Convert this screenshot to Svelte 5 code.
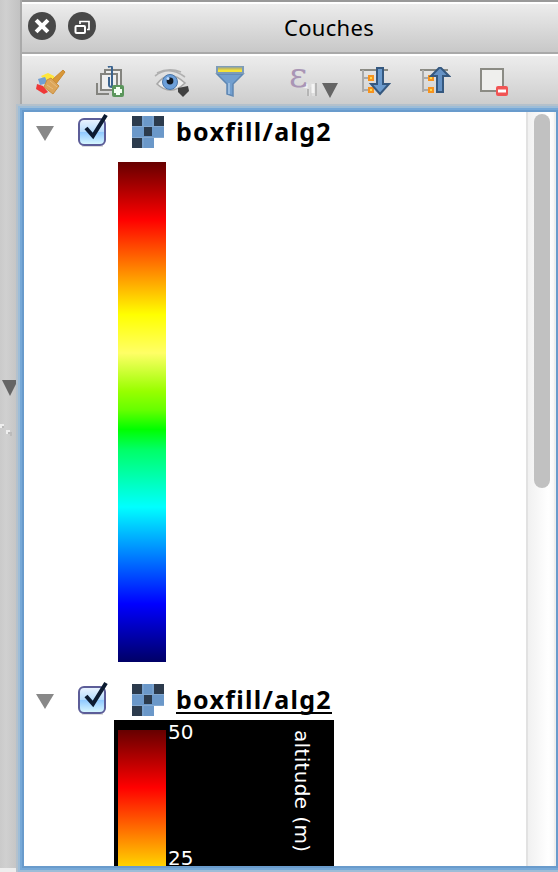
<script>
  const layers = [
    { name: 'boxfill/alg2', active: false },
    { name: 'boxfill/alg2', active: true }
  ];
</script>

{#snippet treeMark(down)}
  <svg class="icon sort" width="32" height="32" viewBox="0 0 32 32">
    <path d="M1 3H29" stroke="#8b8b84" stroke-width="2" />
    <path d="M4 3V25M4 11H10M4 23H10" stroke="#aaa" stroke-width="2" fill="none" />
    <path d="M10 9h4v4h-4zM10 21h4v4h-4z" fill="#ffd84a" stroke="#f7931e" stroke-width="2" />
    {#if down}
      <path d="M18 1h6v16h6l-9 10-9-10h6z" fill="#6b9bce" stroke="#35587f" stroke-width="2" />
    {:else}
      <path d="M18 25h6V9h6L21 0 12 9h6z" fill="#6592c5" stroke="#35587f" stroke-width="2" />
    {/if}
  </svg>
{/snippet}

<div class="window">
  <aside class="splitter">
    <svg width="20" height="60" viewBox="0 0 20 60">
      <path d="M2 0H18L10 16Z" fill="#656565" />
      <path d="M0 44h4v4h-4zM6 50h4v4h-4z" fill="#eee" />
      <path d="M2 46h2v2h-2zM8 52h4v4h-2v-2h-2z" fill="#bbb" />
    </svg>
  </aside>
  <section class="panel">
    <header class="titlebar">
      <svg class="buttons" width="70" height="30" viewBox="0 0 70 30">
        <circle cx="15" cy="15" r="14" fill="#484848" />
        <path d="M10.500 10.500L19.500 19.500M19.500 10.500L10.500 19.500" stroke="#fff" stroke-width="4" stroke-linecap="square" />
        <circle cx="55" cy="15" r="14" fill="#484848" />
        <path d="M53 13V10.500H62V18.500H60" fill="none" stroke="#fff" stroke-width="1.700" />
        <rect x="48.500" y="15" width="9.500" height="7" rx="1" fill="#484848" stroke="#fff" stroke-width="2" />
      </svg>
      <h1>Couches</h1>
    </header>

    <div class="toolbar">
      <svg class="icon style" width="34" height="32" viewBox="0 0 34 32">
        <path d="M6 9l7-3 6 3 1 5-9 1z" fill="#ffe63b" />
        <path d="M3 12l7-2 3 6-8 2z" fill="#719fd3" />
        <path d="M2 17l6 2 5 6-4 2-8-5z" fill="#ef3838" />
        <path d="M17 13L28 3l2 2-9 12z" fill="#d89738" stroke="#c98931" />
        <path d="M12 13l4-2 8 8-6 8-9-7z" fill="#dca55a" stroke="#c98f40" />
        <path d="M12 18l6 4M15 14l7 6" stroke="#e8bd7c" />
      </svg>
      <svg class="icon group" width="32" height="34" viewBox="0 0 32 34">
        <path d="M2 17V28H14" fill="none" stroke="#84847f" stroke-width="2" />
        <rect x="10" y="4" width="16" height="19" fill="#eee" stroke="#84847f" stroke-width="2" />
        <rect x="6" y="8" width="16" height="16" fill="#efefef" stroke="#84847f" stroke-width="2" />
        <path d="M14 11V19q0 2 3 2V2q0-3-4-1M17 2V21" fill="none" stroke="#3c648f" stroke-width="2" />
        <rect x="17" y="19" width="12" height="12" rx="2" fill="#5b965c" />
        <path d="M23 21v8M19 25h8" stroke="#f4fff4" stroke-width="4" />
      </svg>
      <svg class="icon eye" width="38" height="34" viewBox="0 0 38 34">
        <path d="M1 9Q15-2 31 10M3 6Q15 0 27 5" fill="none" stroke="#b0b0b0" stroke-width="1.600" />
        <path d="M3 17Q15 1 31 16Q17 30 3 17Z" fill="#eee" stroke="#a8a8a8" stroke-width="1.600" />
        <circle cx="16" cy="15" r="7.500" fill="#6c9fd9" stroke="#4b76a8" />
        <circle cx="16" cy="14" r="3.400" fill="#121a24" />
        <circle cx="14" cy="11.500" r="1.500" fill="#bddcff" />
        <path d="M24 21L29 20l5-1 1 5-6 6-5-5z" fill="#414141" />
      </svg>
      <svg class="icon funnel" width="30" height="34" viewBox="0 0 30 34">
        <path d="M2 8L12 18V28l6 2V18L28 8Z" fill="#729fcf" stroke="#5f87b3" stroke-width="1.500" />
        <path d="M14 17V28" stroke="#9bbde0" stroke-width="2" />
        <rect x="2" y="1" width="26" height="6" fill="#f6e437" stroke="#7d9cb8" stroke-width="2" />
        <path d="M3 2.500H27" stroke="#c2bb62" stroke-width="2" />
      </svg>
      <div class="expression">
        <span>ε</span>
        <svg width="50" height="34" viewBox="0 0 50 34">
          <path d="M14 17q7-3 14 0v10l-2 3h-3v-9h-2v9h-3l-1-7-3-1z" fill="#dedede" />
          <path d="M17 18v4M24 18v9" stroke="#f4f4f4" stroke-width="3" />
          <path d="M27 17v13M19 23v7" stroke="#b5b5b5" stroke-width="2" />
          <path d="M33 17H49L41 32Z" fill="#656565" />
        </svg>
      </div>
      {@render treeMark(true)}
      {@render treeMark(false)}
      <svg class="icon remove" width="32" height="34" viewBox="0 0 32 34">
        <rect x="2" y="2" width="22" height="22" fill="#efefed" stroke="#8b8b84" stroke-width="2" />
        <rect x="17" y="19" width="12" height="10" rx="2" fill="#f15454" />
        <path d="M19 24h8" stroke="#fff" stroke-width="3" />
      </svg>
    </div>

    <main class="view">
      <div class="tree">
        {#each layers as layer}
          <div class="layer">
            <div class="row">
              <svg width="150" height="40" viewBox="0 0 150 40">
                <defs>
                  <linearGradient id="check" x2="0" y2="1">
                    <stop stop-color="#edf5ff" /><stop offset=".48" stop-color="#b6dcfc" />
                    <stop offset=".52" stop-color="#91caff" /><stop offset="1" stop-color="#dcfaff" />
                  </linearGradient>
                </defs>
                <path d="M12 14H30L21 29Z" fill="#888" />
                <path d="M58 34H79" stroke="#ddd" stroke-width="2" />
                <rect x="55" y="7" width="26" height="26" rx="5" fill="url(#check)" stroke="#5c5d98" stroke-width="2" />
                <path d="M62 16L69 24L82 3" fill="none" stroke="#0c1b31" stroke-width="4" />
                <path d="M108 4h32v22h-10v10h-22z" fill="#6b98c9" />
                <path d="M108 4h10v10h-10zM130 4h10v10h-10zM120 15h8v9h-8zM108 26h10v10h-10z" fill="#2c3b4d" />
                <path d="M119 4V14M129 4V14M119 26V36M108 14.500h32M108 25.500h32" stroke="#84a9d1" />
              </svg>
              <span class="name" class:active={layer.active}>{layer.name}</span>
            </div>
            {#if layer.active}
              <div class="legend">
                <div class="ramp"></div>
                <div class="ticks"><span>50</span><span>25</span></div>
                <div class="unit">altitude (m)</div>
              </div>
            {:else}
              <div class="ramp"></div>
            {/if}
          </div>
        {/each}
      </div>
      <div class="scrollbar"><div class="thumb"></div></div>
    </main>
  </section>
</div>

<style>
  * { box-sizing: border-box; }
  .window { display: flex; width: 558px; height: 872px; overflow: hidden; background: #eee; font-family: "Noto Sans", sans-serif; color: #000; }
  .window svg { display: block; flex: none; }
  .splitter { width: 20px; height: 868px; padding-top: 380px; background: linear-gradient(90deg, #cacaca, #d0d0d0 30%, #c2c2c2); }
  .panel { width: 538px; height: 872px; border-left: 2px solid #aaa; display: flex; flex-direction: column; }
  .titlebar { height: 54px; flex: none; display: flex; border-top: 2px solid #999; border-bottom: 2px solid #a9a9a9; box-shadow: inset 0 2px #fff; background: linear-gradient(#eee, #c8c8c8); }
  .buttons { margin: 9px 0 0 5px; }
  h1 { margin: 8px 0 0 187px; font-size: 22px; line-height: 34px; font-weight: 400; letter-spacing: .3px; }
  .toolbar { height: 58px; flex: none; display: flex; padding-top: 12px; box-shadow: inset 0 2px #fff; background: linear-gradient(#eee, #c8c8c8); }
  .style { margin: 1px 0 0 13px; }
  .group { margin-left: 26px; }
  .eye { margin: 1px 0 0 27px; }
  .funnel { margin-left: 23px; }
  .expression { display: flex; width: 52px; height: 34px; margin-left: 44px; }
  .expression span { width: 18px; margin-right: -18px; font: 36px/30px "DejaVu Serif", serif; color: #a995b5; transform: translateY(-6px); }
  .sort { margin: 1px 0 0 18px; }
  .sort + .sort { margin-left: 28px; }
  .remove { margin: 1px 0 0 28px; }
  .view { position: relative; display: flex; width: 532px; height: 754px; margin-left: 2px; background: #fff; box-shadow: 0 0 0 2px #699bcc, 0 0 0 4px #77a9d8, 0 0 0 6px #9dbdd8, 0 0 0 8px #b4c1cc; }
  .tree { width: 502px; overflow: hidden; }
  .layer { height: 568px; }
  .layer:last-child { height: 186px; }
  .row { display: flex; height: 40px; }
  .name { align-self: flex-start; margin-left: 2px; height: 34px; font-size: 25px; line-height: 38px; font-weight: 700; letter-spacing: 1.3px; white-space: nowrap; }
  .active { border-bottom: 2px solid #000; }
  .ramp { width: 48px; height: 500px; flex: none; background: linear-gradient(#600, #f00 11.5%, #f60 19.200%, #ff0 30.500%, #ff6 38.200%, #9f0 45.800%, #6f0 49.600%, #0f0 53.500%, #00ff66 57.500%, #0ff 69%, #00f 88.400%, #006); }
  .layer > .ramp { margin: 10px 0 0 94px; }
  .legend { display: flex; width: 220px; height: 146px; margin-left: 90px; padding: 10px 0 0 4px; overflow: hidden; background: #000; color: #fff; font-family: "DejaVu Sans", sans-serif; font-size: 20px; }
  .ticks { display: flex; flex-direction: column; gap: 106px; width: 122px; padding-left: 2px; margin-top: -8px; line-height: 20px; }
  .unit { writing-mode: vertical-rl; line-height: 28px; letter-spacing: .35px; white-space: nowrap; }
  .scrollbar { width: 30px; padding: 2px 6px; border-left: 2px solid #e2e2e2; border-right: 2px solid #eee; background: linear-gradient(90deg, #f1f1f1, #fff 80%, #f8f8f8); }
  .thumb { width: 16px; height: 374px; border-radius: 8px; background: #c1c1c1; }
</style>
